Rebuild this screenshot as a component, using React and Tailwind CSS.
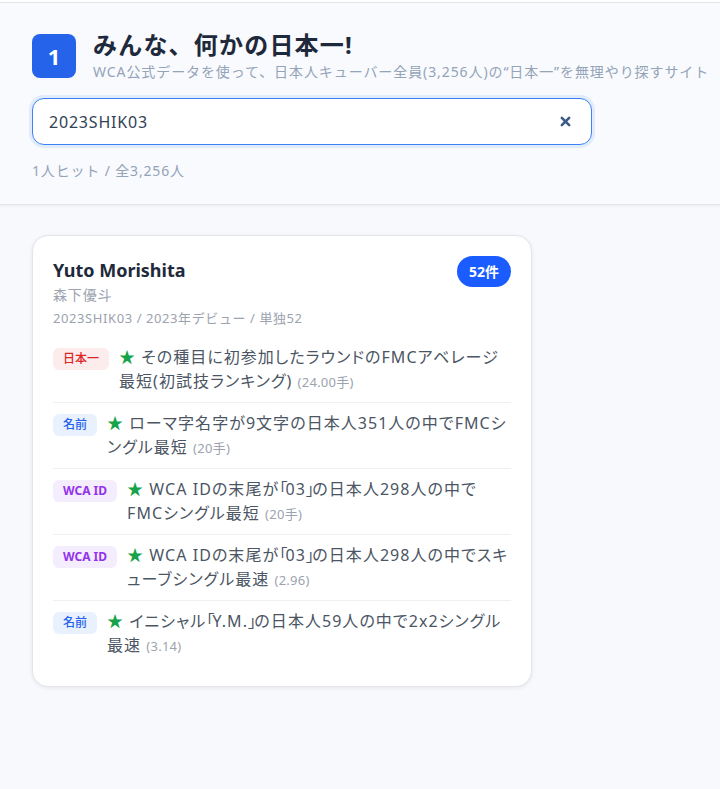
import React from "react";

const items = [
  {
    tag: "日本一",
    tagCls: "bg-[#fdecec] text-[#dc2626] font-medium",
    text: "その種目に初参加したラウンドのFMCアベレージ最短(初試技ランキング)",
    val: "(24.00手)",
  },
  {
    tag: "名前",
    tagCls: "bg-[#eaf1fe] text-[#2563eb] font-medium",
    text: "ローマ字名字が9文字の日本人351人の中でFMCシングル最短",
    val: "(20手)",
  },
  {
    tag: "WCA ID",
    tagCls: "bg-[#f3edfe] text-[#9333ea] font-bold",
    text: "WCA IDの末尾が「03」の日本人298人の中でFMCシングル最短",
    val: "(20手)",
  },
  {
    tag: "WCA ID",
    tagCls: "bg-[#f3edfe] text-[#9333ea] font-bold",
    text: "WCA IDの末尾が「03」の日本人298人の中でスキューブシングル最速",
    val: "(2.96)",
  },
  {
    tag: "名前",
    tagCls: "bg-[#eaf1fe] text-[#2563eb] font-medium",
    text: "イニシャル「Y.M.」の日本人59人の中で2x2シングル最速",
    val: "(3.14)",
  },
];

function Body({ text }) {
  const parts = text.split(/([「」])/);
  return parts.map((p, i) =>
    p === "「" || p === "」" ? (
      <span key={i} className="tracking-[-0.1em]">
        {p}
      </span>
    ) : (
      <React.Fragment key={i}>{p}</React.Fragment>
    )
  );
}

export default function App() {
  return (
    <div
      lang="ja"
      className="min-h-[789px] bg-[#f7f9fd]"
      style={{ fontFamily: '"Noto Sans", "Noto Sans CJK JP", sans-serif' }}
    >
      <div className="h-[2px] bg-white" />
      <header className="border-t border-b border-[#e2e5ea] bg-[#f8fafd] px-8 pt-[27px] pb-[23px] shadow-[0_1px_3px_rgba(0,0,0,0.06)]">
        <div className="flex items-center gap-[17px]">
          <div className="flex h-[44px] w-[44px] shrink-0 items-center justify-center rounded-lg bg-[#2563eb] text-[22px] font-bold text-white">
            1
          </div>
          <div className="min-w-0">
            <h1 className="text-[24px] font-bold leading-[30px] tracking-[0.05em] text-[#1e293b]">
              みんな、何かの日本一!
            </h1>
            <p className="mt-[2px] whitespace-nowrap text-[14px] leading-5 tracking-[0.065em] text-[#94a3b8]">
              WCA公式データを使って、日本人キューバー全員(3,256人)の“日本一”を無理やり探すサイト
            </p>
          </div>
        </div>
        <div className="mt-[16px] flex h-[47px] w-[560px] items-center rounded-xl border border-[#3b82f6] bg-white px-4 shadow-[0_0_0_3px_rgba(59,130,246,0.12)]">
          <span className="flex-1 text-[16px] tracking-[0.05em] text-[#334155]">2023SHIK03</span>
          <svg width="11" height="11" viewBox="0 0 12 12" className="mr-[4px]">
            <path d="M2 2L10 10M10 2L2 10" stroke="#3c5a87" strokeWidth="2.8" strokeLinecap="round" />
          </svg>
        </div>
        <p className="mt-4 text-[14px] leading-5 tracking-[0.06em] text-[#94a3b8]">1人ヒット / 全3,256人</p>
      </header>

      <main className="px-8 pt-[30px]">
        <div className="w-[500px] rounded-2xl border border-[#e2e5ea] bg-white px-5 pt-5 pb-5 shadow-[0_1px_4px_rgba(0,0,0,0.08)]">
          <div className="flex items-start justify-between">
            <div>
              <div className="text-[18px] font-bold leading-7 text-[#1e293b]">Yuto Morishita</div>
              <div className="mt-[1px] text-[14px] leading-5 tracking-[0.06em] text-[#9ca3af]">森下優斗</div>
              <div className="mt-1 text-[13px] leading-[18px] tracking-[0.045em] text-[#9ca3af]">
                2023SHIK03 / 2023年デビュー / 単独52
              </div>
            </div>
            <div className="flex h-[31px] items-center rounded-full bg-[#1a5cff] px-3 text-[14px] font-bold text-white">
              52件
            </div>
          </div>
          <ul className="mt-[10px]">
            {items.map((it, i) => (
              <li
                key={i}
                className={
                  "flex items-start gap-[10px] py-2" +
                  (i < items.length - 1 ? " border-b border-[#eef0f3]" : "")
                }
              >
                <span
                  className={
                    "mt-[3px] flex h-[22px] shrink-0 items-center rounded-md px-2.5 text-[12px] " +
                    it.tagCls
                  }
                >
                  {it.tag}
                </span>
                <p className="text-[16px] leading-6 tracking-[0.065em] text-[#4b5563] [font-feature-settings:'palt'] [line-break:loose]">
                  <span className="text-[#16a34a]">★</span> <Body text={it.text} />{" "}
                  <span className="text-[13px] tracking-[0.02em] text-[#9ca3af]">{it.val}</span>
                </p>
              </li>
            ))}
          </ul>
        </div>
      </main>
    </div>
  );
}
